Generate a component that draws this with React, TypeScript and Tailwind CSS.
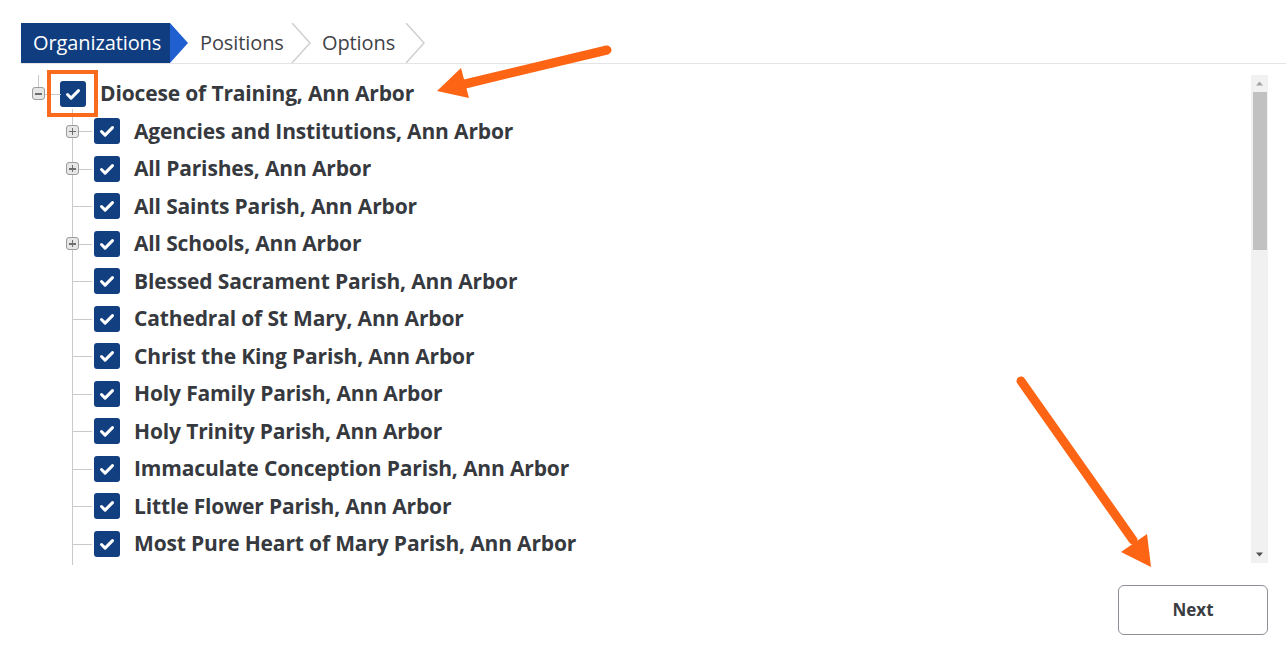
const children: { label: string; expandable?: boolean }[] = [
  { label: 'Agencies and Institutions, Ann Arbor', expandable: true },
  { label: 'All Parishes, Ann Arbor', expandable: true },
  { label: 'All Saints Parish, Ann Arbor' },
  { label: 'All Schools, Ann Arbor', expandable: true },
  { label: 'Blessed Sacrament Parish, Ann Arbor' },
  { label: 'Cathedral of St Mary, Ann Arbor' },
  { label: 'Christ the King Parish, Ann Arbor' },
  { label: 'Holy Family Parish, Ann Arbor' },
  { label: 'Holy Trinity Parish, Ann Arbor' },
  { label: 'Immaculate Conception Parish, Ann Arbor' },
  { label: 'Little Flower Parish, Ann Arbor' },
  { label: 'Most Pure Heart of Mary Parish, Ann Arbor' },
]

function Check() {
  return (
    <span className="flex h-[26px] w-[26px] shrink-0 items-center justify-center rounded-[3px] bg-[#123f80]">
      <svg width="26" height="26" viewBox="0 0 26 26" fill="none">
        <path d="M7.5 13.5l3.6 3.6L18.5 9.6" stroke="white" strokeWidth="3" strokeLinecap="round" strokeLinejoin="round" />
      </svg>
    </span>
  )
}

function Toggle({ open }: { open?: boolean }) {
  return (
    <span className="relative z-10 flex h-[13px] w-[13px] items-center justify-center rounded-[3px] border border-[#9c9c9c] bg-[#e6e6e6]">
      <span className="absolute h-[1.5px] w-[7px] bg-[#6e6e6e]" />
      {!open && <span className="absolute h-[7px] w-[1.5px] bg-[#6e6e6e]" />}
    </span>
  )
}

function Chevron() {
  return (
    <svg width="22" height="40" viewBox="0 0 22 40" className="shrink-0">
      <path d="M1 0L19 20L1 40" fill="none" stroke="#cfcfcf" strokeWidth="1.5" />
    </svg>
  )
}

export default function App() {
  return (
    <div className="relative h-[652px] w-[1286px] overflow-hidden bg-white text-[#36393e]" style={{ fontFamily: '"Open Sans", "Liberation Sans", sans-serif' }}>
      {/* steps */}
      <div className="ml-[21px] mt-[23px] flex h-[41px] items-start border-b border-[#e4e4e4]">
        <div className="flex h-[40px] items-center">
          <span className="flex h-full w-[149px] items-center bg-[#0f3d80] pl-[12px] text-[20px] tracking-[-0.1px] text-white">Organizations</span>
          <svg width="19" height="40" viewBox="0 0 19 40" className="shrink-0">
            <path d="M0 0L18 20L0 40Z" fill="#1f5fd0" />
          </svg>
        </div>
        <div className="flex h-[40px] items-center">
          <span className="w-[102px] pl-[11px] text-[20px] tracking-[-0.1px] text-[#3f4247]">Positions</span>
          <Chevron />
          <span className="w-[92px] pl-[9px] text-[20px] tracking-[-0.1px] text-[#3f4247]">Options</span>
          <Chevron />
        </div>
      </div>

      {/* tree + scrollbar */}
      <div className="flex h-[501px] pt-[10px]">
        <div className="relative flex-1 overflow-hidden pl-[26px] pt-[1px]">
          {/* root */}
          <div className="relative flex h-[37.5px] items-center">
            <span className="absolute left-[12px] top-0 h-[14px] w-px bg-[#c9c9c9]" />
            <span className="absolute left-[19px] top-[18.5px] h-px w-[16px] bg-[#c9c9c9]" />
            <span className="ml-[6px]"><Toggle open /></span>
            <span className="ml-[15px]"><Check /></span>
            <span className="ml-[14px] whitespace-nowrap text-[21px] font-bold tracking-[-0.15px]">Diocese of Training, Ann Arbor</span>
          </div>
          {/* children */}
          <div className="relative ml-[34px]">
            <span className="absolute left-[12px] top-[-4px] h-[600px] w-px bg-[#c9c9c9]" />
            {children.map(c => (
              <div key={c.label} className="relative flex h-[37.5px] items-center">
                <span className="absolute left-[12px] top-[18.5px] h-px w-[20px] bg-[#c9c9c9]" />
                <span className="ml-[6px] w-[13px]">{c.expandable && <Toggle />}</span>
                <span className="ml-[15px]"><Check /></span>
                <span className="ml-[14px] whitespace-nowrap text-[21px] font-bold tracking-[-0.15px]">{c.label}</span>
              </div>
            ))}
          </div>
        </div>
        <div className="mr-[18px] mt-[1px] flex h-[488px] w-[17px] flex-col items-center bg-[#f1f1f1]">
          <svg width="17" height="17" viewBox="0 0 17 17"><path d="M5 10.5h7L8.5 6.5z" fill="#a3a3a3" /></svg>
          <div className="h-[158px] w-[14px] bg-[#c1c1c1]" />
          <div className="flex-1" />
          <svg width="17" height="17" viewBox="0 0 17 17"><path d="M5 6.5h7L8.5 10.5z" fill="#505050" /></svg>
        </div>
      </div>

      <div className="mt-[20px] flex justify-end pr-[18px]">
        <button className="h-[50px] w-[150px] rounded-[6px] border border-[#8d9096] bg-white text-[17px] font-bold text-[#3a3d42]">Next</button>
      </div>

      {/* annotations */}
      <svg className="pointer-events-none absolute left-0 top-0" width="1286" height="652">
        <rect x="49" y="72" width="47" height="43" fill="none" stroke="#fb6b1d" strokeWidth="4" />
        <line x1="607" y1="50" x2="465" y2="84" stroke="#fd6414" strokeWidth="9" strokeLinecap="round" />
        <path d="M437 91L461 68L469 98Z" fill="#fd6414" />
        <line x1="1021" y1="381" x2="1133" y2="540" stroke="#fd6414" strokeWidth="9" strokeLinecap="round" />
        <path d="M1151 567L1121 552L1147 534Z" fill="#fd6414" />
      </svg>
    </div>
  )
}
